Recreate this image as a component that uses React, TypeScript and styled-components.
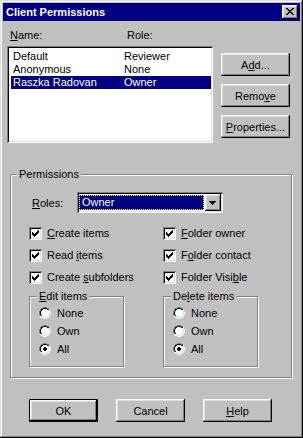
import React from 'react'
import styled, { createGlobalStyle, css } from 'styled-components'

const GlobalStyle = createGlobalStyle`
  html, body { margin: 0; padding: 0; background: #c0c0c0; }
  body { font-family: "Liberation Sans", Arial, sans-serif; font-size: 11px; color: #000; }
  * { box-sizing: border-box; }
`

const raised = css`
  box-shadow: inset -1px -1px #000, inset 1px 1px #fff, inset -2px -2px #808080, inset 2px 2px #dfdfdf;
`
const sunken = css`
  box-shadow: inset 1px 1px #808080, inset -1px -1px #fff, inset 2px 2px #000, inset -2px -2px #dfdfdf;
`
const defaultBevel = css`
  box-shadow: inset 0 0 0 1px #000, inset -2px -2px #000, inset 2px 2px #fff, inset -3px -3px #808080, inset 3px 3px #dfdfdf;
`

const Window = styled.div`
  width: 303px;
  height: 438px;
  padding: 3px;
  background: #c0c0c0;
  box-shadow: inset -1px -1px #000, inset 1px 1px #dfdfdf, inset -2px -2px #808080, inset 2px 2px #fff;
  display: flex;
  flex-direction: column;
`
const TitleBar = styled.div`
  height: 18px;
  flex: none;
  background: #000080;
  color: #fff;
  display: flex;
  align-items: center;
  justify-content: space-between;
  padding: 0 2px 0 3px;
  font-weight: bold;
`
const CloseButton = styled.div`
  width: 16px;
  height: 14px;
  background: #c0c0c0;
  ${raised}
  display: flex;
  align-items: center;
  justify-content: center;
  padding-bottom: 1px;
`
const Body = styled.div`
  flex: 1;
  padding: 8px 0 0 4px;
  display: flex;
  flex-direction: column;
`
const Top = styled.div`
  display: grid;
  grid-template-columns: 206px 69px;
  column-gap: 8px;
`
const ListHeader = styled.div`
  display: grid;
  grid-template-columns: 117px 1fr;
  padding-left: 3px;
  height: 13px;
  line-height: 13px;
  margin-bottom: 4px;
`
const ListBox = styled.div`
  height: 97px;
  background: #fff;
  ${sunken}
  padding: 4px 2px 4px 4px;
`
const ListRow = styled.div<{ $selected?: boolean }>`
  display: grid;
  grid-template-columns: 111px 1fr;
  padding-left: 2px;
  height: 13px;
  line-height: 13px;
  background: ${p => (p.$selected ? '#000080' : 'transparent')};
  color: ${p => (p.$selected ? '#fff' : '#000')};
`
const SideButtons = styled.div`
  padding-top: 24px;
  display: flex;
  flex-direction: column;
  gap: 8px;
`
const Button = styled.button<{ $default?: boolean }>`
  width: 69px;
  height: 23px;
  padding: 0;
  border: 0;
  background: #c0c0c0;
  font: inherit;
  color: #000;
  ${p => (p.$default ? defaultBevel : raised)}
`
const Key = styled.u`
  text-decoration: underline;
`
const Group = styled.div`
  position: relative;
  border: 1px solid #808080;
  box-shadow: inset 1px 1px #fff, 1px 1px #fff;
`
const Caption = styled.span<{ $left: number }>`
  position: absolute;
  top: -7px;
  left: ${p => p.$left}px;
  padding: 0 2px;
  background: #c0c0c0;
  line-height: 13px;
`
const PermGroup = styled(Group)`
  margin: 31px 0 0 3px;
  width: 282px;
  padding: 17px 0 10px 18px;
`
const RolesRow = styled.div`
  display: flex;
  align-items: center;
  height: 21px;
  padding-left: 3px;
`
const RolesLabel = styled.span`
  width: 45px;
`
const Combo = styled.div`
  width: 146px;
  height: 21px;
  background: #fff;
  ${sunken}
  padding: 2px;
  display: flex;
`
const ComboField = styled.div`
  flex: 1;
  padding: 1px 1px 0 0;
  display: flex;
`
const ComboValue = styled.div`
  flex: 1;
  height: 15px;
  background: #000080;
  color: #fff;
  padding-left: 3px;
  line-height: 15px;
  outline: 1px dotted #ffff7f;
  outline-offset: -1px;
`
const DropButton = styled.div`
  width: 16px;
  height: 17px;
  background: #c0c0c0;
  ${raised}
  display: flex;
  align-items: center;
  justify-content: center;
  padding-right: 1px;
`
const Checks = styled.div`
  display: grid;
  grid-template-columns: 134px 1fr;
  row-gap: 9px;
  margin-top: 14px;
`
const CheckItem = styled.label`
  display: flex;
  align-items: center;
  gap: 5px;
  height: 13px;
  line-height: 13px;
`
const CheckBox = styled.span`
  width: 13px;
  height: 13px;
  flex: none;
  background: #fff;
  ${sunken}
  padding: 3px;
`
const SubGroups = styled.div`
  display: grid;
  grid-template-columns: 134px 1fr;
  margin-top: 12px;
`
const SubGroup = styled(Group)`
  width: 95px;
  height: 71px;
  padding: 10px 0 0 9px;
  display: flex;
  flex-direction: column;
  gap: 6px;
`
const RadioItem = styled.label`
  display: flex;
  align-items: center;
  gap: 6px;
  height: 12px;
  line-height: 12px;
`
const ButtonRow = styled.div`
  display: flex;
  gap: 18px;
  margin-top: 21px;
  padding-left: 22px;
`
const PixelSvg = styled.svg`
  display: block;
  flex: none;
`

const Pixels = ({ map, palette }: { map: string[]; palette: Record<string, string> }) => (
  <PixelSvg width={map[0].length} height={map.length} shapeRendering="crispEdges">
    {map.flatMap((row, y) =>
      row.split('').map((c, x) =>
        palette[c] ? <rect key={x + '-' + y} x={x} y={y} width={1} height={1} fill={palette[c]} /> : null
      )
    )}
  </PixelSvg>
)

const BLACK = { '#': '#000' }
const CLOSE_X = ['##....##', '.##..##.', '..####..', '...##...', '..####..', '.##..##.', '##....##']
const CHECK = ['......#', '.....##', '#...###', '##.###.', '#####..', '.###...', '..#....']
const ARROW = ['#######', '.#####.', '..###..', '...#...']
const RADIO = [
  '....GGGG....',
  '..GGKKKKGG..',
  '.GKKWWWWKKW.',
  '.GKWWWWWWLW.',
  'GKWWWWWWWWLW',
  'GKWWWWWWWWLW',
  'GKWWWWWWWWLW',
  'GKWWWWWWWWLW',
  '.GKWWWWWWLW.',
  '.WLLWWWWLLW.',
  '..WWLLLLWW..',
  '....WWWW....',
]
const DOT = [
  '............',
  '............',
  '............',
  '............',
  '.....##.....',
  '....####....',
  '....####....',
  '.....##.....',
]
const RADIO_COLORS = { G: '#808080', K: '#000', W: '#fff', L: '#dfdfdf' }

const Radio = ({ label, checked }: { label: string; checked?: boolean }) => {
  const map = checked
    ? RADIO.map((row, y) => (DOT[y] ? row.split('').map((c, x) => (DOT[y][x] === '#' ? '#' : c)).join('') : row))
    : RADIO
  return (
    <RadioItem>
      <Pixels map={map} palette={{ ...RADIO_COLORS, '#': '#000' }} />
      {label}
    </RadioItem>
  )
}

const Check = ({ children }: { children: React.ReactNode }) => (
  <CheckItem>
    <CheckBox>
      <Pixels map={CHECK} palette={BLACK} />
    </CheckBox>
    <span>{children}</span>
  </CheckItem>
)

const people = [
  { name: 'Default', role: 'Reviewer' },
  { name: 'Anonymous', role: 'None' },
  { name: 'Raszka Radovan', role: 'Owner', selected: true },
]

const RadioGroup = ({ caption }: { caption: React.ReactNode }) => (
  <SubGroup>
    <Caption $left={7}>{caption}</Caption>
    <Radio label="None" />
    <Radio label="Own" />
    <Radio label="All" checked />
  </SubGroup>
)

export default function App() {
  return (
    <>
      <GlobalStyle />
      <Window>
        <TitleBar>
          <span>Client Permissions</span>
          <CloseButton>
            <Pixels map={CLOSE_X} palette={BLACK} />
          </CloseButton>
        </TitleBar>
        <Body>
          <Top>
            <div>
              <ListHeader>
                <span><Key>N</Key>ame:</span>
                <span>Role:</span>
              </ListHeader>
              <ListBox>
                {people.map(p => (
                  <ListRow key={p.name} $selected={p.selected}>
                    <span>{p.name}</span>
                    <span>{p.role}</span>
                  </ListRow>
                ))}
              </ListBox>
            </div>
            <SideButtons>
              <Button>A<Key>d</Key>d...</Button>
              <Button>Remo<Key>v</Key>e</Button>
              <Button><Key>P</Key>roperties...</Button>
            </SideButtons>
          </Top>
          <PermGroup>
            <Caption $left={6}>Permissions</Caption>
            <RolesRow>
              <RolesLabel><Key>R</Key>oles:</RolesLabel>
              <Combo>
                <ComboField>
                  <ComboValue>Owner</ComboValue>
                </ComboField>
                <DropButton>
                  <Pixels map={ARROW} palette={BLACK} />
                </DropButton>
              </Combo>
            </RolesRow>
            <Checks>
              <Check><Key>C</Key>reate items</Check>
              <Check><Key>F</Key>older owner</Check>
              <Check>Read <Key>i</Key>tems</Check>
              <Check>F<Key>o</Key>lder contact</Check>
              <Check>Create <Key>s</Key>ubfolders</Check>
              <Check>Folder Visi<Key>b</Key>le</Check>
            </Checks>
            <SubGroups>
              <RadioGroup caption={<><Key>E</Key>dit items</>} />
              <RadioGroup caption={<>De<Key>l</Key>ete items</>} />
            </SubGroups>
          </PermGroup>
          <ButtonRow>
            <Button $default>OK</Button>
            <Button>Cancel</Button>
            <Button><Key>H</Key>elp</Button>
          </ButtonRow>
        </Body>
      </Window>
    </>
  )
}
